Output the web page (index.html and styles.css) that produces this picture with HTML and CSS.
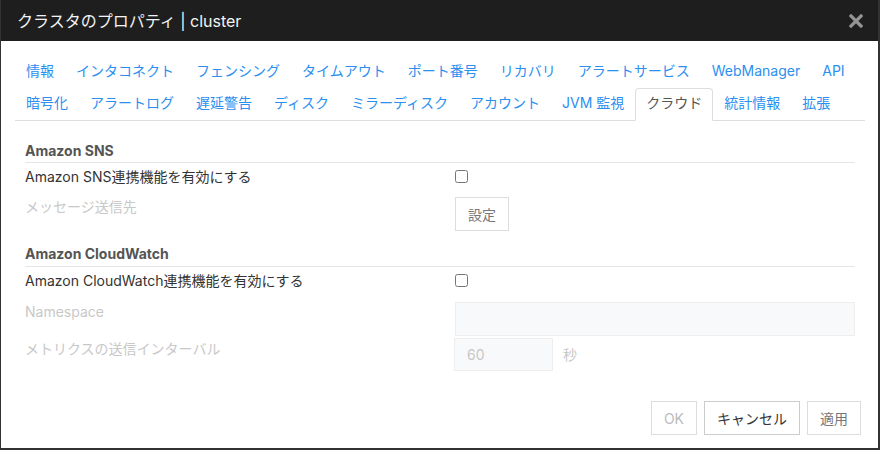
FILE: index.html
```html
<!DOCTYPE html>
<html lang="ja">
<head>
  <meta charset="UTF-8" />
  <meta name="viewport" content="width=device-width, initial-scale=1.0" />
  <title>クラスタのプロパティ</title>
  <link rel="stylesheet" href="styles.css">
</head>
<body>

  <div class="modal">
    <div class="modal-header">
      <h2>クラスタのプロパティ | cluster</h2>
      <button class="close" title="閉じる">
        <svg width="14" height="14" viewBox="0 0 14 14">
          <path d="M2 2 L12 12 M12 2 L2 12" stroke="#949494" stroke-width="3.2" stroke-linecap="square" />
        </svg>
      </button>
    </div>

    <div class="modal-body">
      <!-- tabs: two rows, the second one carries the bottom rule -->
      <div class="tabs">
        <div class="tab-row">
          <a class="tab">情報</a>
          <a class="tab">インタコネクト</a>
          <a class="tab">フェンシング</a>
          <a class="tab">タイムアウト</a>
          <a class="tab">ポート番号</a>
          <a class="tab">リカバリ</a>
          <a class="tab">アラートサービス</a>
          <a class="tab">WebManager</a>
          <a class="tab">API</a>
        </div>
        <div class="tab-row">
          <a class="tab">暗号化</a>
          <a class="tab">アラートログ</a>
          <a class="tab">遅延警告</a>
          <a class="tab">ディスク</a>
          <a class="tab">ミラーディスク</a>
          <a class="tab">アカウント</a>
          <a class="tab">JVM 監視</a>
          <a class="tab active">クラウド</a>
          <a class="tab">統計情報</a>
          <a class="tab">拡張</a>
        </div>
      </div>

      <div class="section first">
        <div class="legend">Amazon SNS</div>
        <div class="row">
          <label class="label">Amazon SNS連携機能を有効にする</label>
          <div class="control"><input type="checkbox" class="check" /></div>
        </div>
        <div class="row">
          <label class="label disabled">メッセージ送信先</label>
          <div class="control"><button class="btn">設定</button></div>
        </div>
      </div>

      <div class="section second">
        <div class="legend">Amazon CloudWatch</div>
        <div class="row">
          <label class="label">Amazon CloudWatch連携機能を有効にする</label>
          <div class="control"><input type="checkbox" class="check" /></div>
        </div>
        <div class="row row-input">
          <label class="label disabled">Namespace</label>
          <div class="control"><input class="text wide" disabled /></div>
        </div>
        <div class="row row-input last">
          <label class="label disabled">メトリクスの送信インターバル</label>
          <div class="control">
            <input class="text short" value="60" disabled />
            <span class="unit">秒</span>
          </div>
        </div>
      </div>
    </div>

    <div class="modal-footer">
      <button class="btn disabled">OK</button>
      <button class="btn primary">キャンセル</button>
      <button class="btn">適用</button>
    </div>
  </div>

</body>
</html>
```

FILE: styles.css
```css
body {
  margin: 0;
  background: #333;
  font-family: Inter, "Noto Sans CJK JP", sans-serif;
  font-size: 14px;
  line-height: 20px;
}

.modal {
  display: flex;
  flex-direction: column;
  width: 877px;
  height: 448px;
  margin-left: 1px;
  background: white;
}

.modal-header {
  display: flex;
  justify-content: space-between;
  align-items: center;
  height: 41px;
  padding: 0 16px;
  background: #1e1e1e;
}

.modal-header h2 {
  margin: 0;
  color: #f4f4f4;
  font-size: 16px;
  font-weight: normal;
  line-height: 22px;
}

.close {
  display: flex;
  padding: 0;
  margin-right: -1px;
  border: none;
  background: none;
}

.modal-body {
  padding: 0 13px 0 14px;
}

.tabs {
  margin-top: 15px;
  border-bottom: 1px solid #ddd;
}

.tab-row {
  display: flex;
}

.tab {
  padding: 4px 10px 6px;
  border: 1px solid transparent;
  border-radius: 4px 4px 0 0;
  color: #2b8ff0;
  cursor: pointer;
  white-space: nowrap;
}

.tab.active {
  color: #555;
  border-color: #ddd;
  border-bottom-color: white;
  margin-bottom: -1px;
  background: white;
}

.section {
  padding: 0 10px;
}

.section.first { margin-top: 20px; }
.section.second { margin-top: 7px; }

.legend {
  color: #555;
  font-weight: bold;
  padding-bottom: 1px;
  border-bottom: 1px solid #e5e5e5;
}

.second .legend {
  padding-bottom: 2px;
}

.row {
  display: flex;
  align-items: flex-start;
  padding: 4px 0 6px;
}

.row-input {
  padding: 5px 0 1px;
}

.row-input.last {
  padding: 1px 0 0;
}

.row-input.last .label {
  padding-top: 1px;
}

.label {
  width: 430px;
  flex-shrink: 0;
  color: #333;
}

.label.disabled {
  color: #c8c8c8;
}

.control {
  display: flex;
  align-items: center;
  flex: 1;
  min-height: 20px;
}

.check {
  width: 13px;
  height: 13px;
  margin: 0 0 1px;
}

.btn {
  height: 34px;
  padding: 0 12px;
  background: white;
  border: 1px solid #ddd;
  color: #777;
  font-family: inherit;
  font-size: 14px;
  cursor: pointer;
}

.btn.disabled {
  color: #bbb;
}

.btn.primary {
  color: #333;
  border-color: #ccc;
}

.text {
  box-sizing: border-box;
  height: 34px;
  padding: 0 12px;
  border: 1px solid #eee;
  background: #f8f9fa;
  color: #c8c8c8;
  font-family: inherit;
  font-size: 14px;
}

.text.wide {
  width: 400px;
}

.text.short {
  width: 99px;
  height: 33px;
  margin-left: -1px;
}

.unit {
  margin-left: 10px;
  color: #c8c8c8;
}

.modal-footer {
  display: flex;
  justify-content: flex-end;
  gap: 7px;
  margin-top: auto;
  padding: 0 17px 13px;
}
```
